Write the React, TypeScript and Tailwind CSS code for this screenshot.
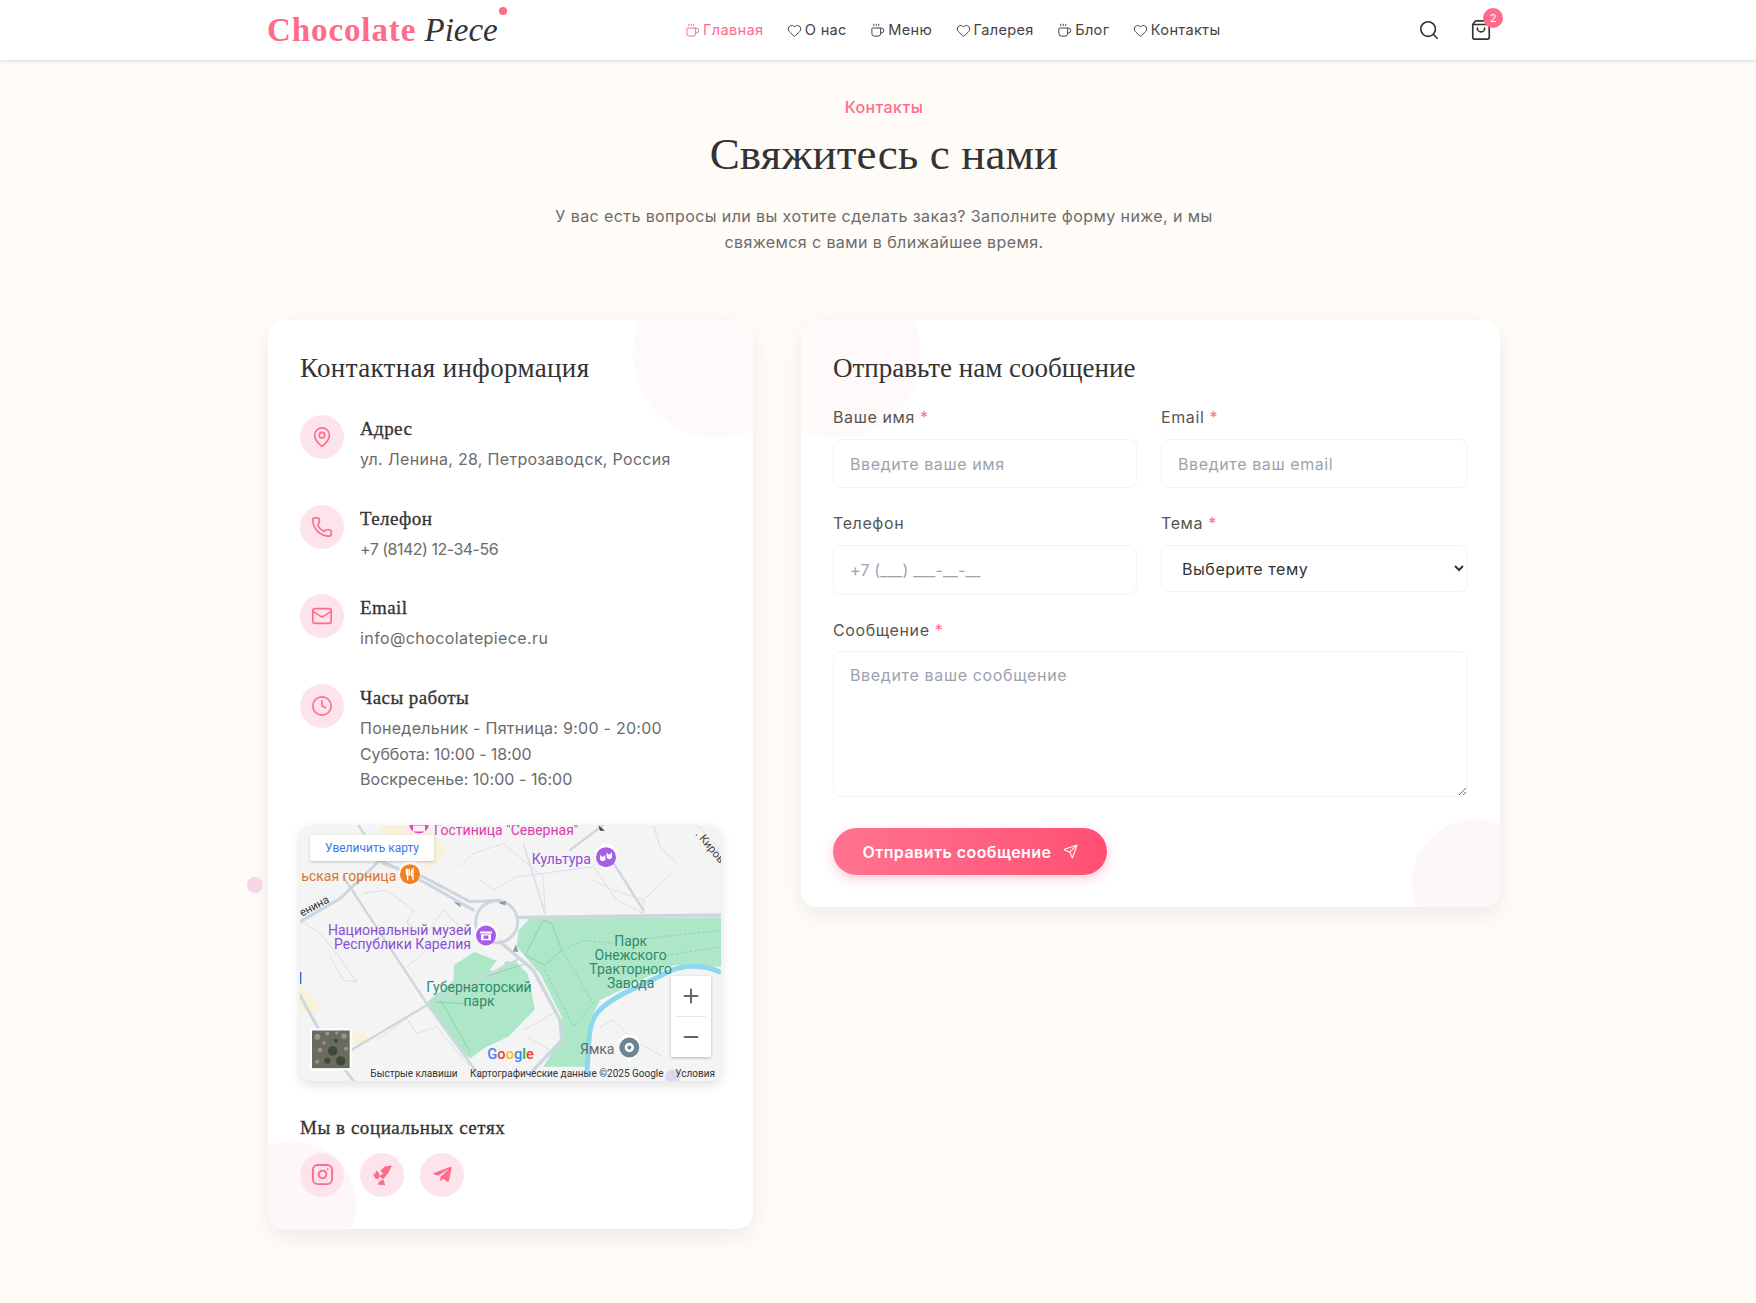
import { Clock, Coffee, Heart, Instagram, Mail, MapPin, Minus, Phone, Plus, Search, Send, ShoppingBag } from 'lucide-react'
import { FaTelegramPlane } from 'react-icons/fa'

const serif = "font-['Liberation_Serif',serif]"
const subHead = `text-[19px] leading-[28px] tracking-[0.4px] text-[#333] [-webkit-text-stroke:0.3px_#333] ${serif}`

const navItems = [
  { label: 'Главная', icon: 'cup', active: true },
  { label: 'О нас', icon: 'heart' },
  { label: 'Меню', icon: 'cup' },
  { label: 'Галерея', icon: 'heart' },
  { label: 'Блог', icon: 'cup' },
  { label: 'Контакты', icon: 'heart' },
]

const contacts = [
  { title: 'Адрес', Icon: MapPin, lines: [{ text: 'ул. Ленина, 28, Петрозаводск, Россия', cls: 'tracking-[0.3px]' }] },
  { title: 'Телефон', Icon: Phone, lines: [{ text: '+7 (8142) 12-34-56', cls: 'tracking-[-0.5px]' }] },
  { title: 'Email', Icon: Mail, lines: [{ text: 'info@chocolatepiece.ru', cls: 'tracking-[0.4px]' }] },
  {
    title: 'Часы работы',
    Icon: Clock,
    lines: [
      { text: 'Понедельник - Пятница: 9:00 - 20:00', cls: 'tracking-[0.27px]' },
      { text: 'Суббота: 10:00 - 18:00', cls: 'tracking-[-0.1px]' },
      { text: 'Воскресенье: 10:00 - 16:00', cls: 'tracking-[0.04px]' },
    ],
  },
]

const inputClass =
  'h-[49.6px] w-full rounded-lg border border-[#f8f3e6] bg-white px-4 text-[16px] text-[#333] outline-none placeholder:text-[#9ca3af]'

const Label = ({ text, required }: { text: string; required?: boolean }) => (
  <label className="mb-2 block text-[16px] leading-[25.6px] tracking-[0.6px] text-[#555]">
    {text}
    {required && <span className="text-[#ff6b8b]"> *</span>}
  </label>
)

const Pin = ({ x, y, color, children }: { x: number; y: number; color: string; children?: React.ReactNode }) => (
  <g transform={`translate(${x} ${y})`}>
    <path d="M-32 2 A33 33 0 1 1 32 2 Q24 22 0 42 Q-24 22 -32 2Z" fill="#fff" />
    <circle r="30" fill={color} />
    {children}
  </g>
)

const MapBlock = () => (
  <div className="relative h-[256px] w-full overflow-hidden rounded-xl bg-[#f4f4f5] shadow-[0_4px_12px_rgba(0,0,0,0.12)]">
    <svg viewBox="180 45 1263 767" className="block h-full w-full">
      <rect x="180" y="45" width="1263" height="767" fill="#f4f4f5" />
      {/* sand blocks */}
      <path d="M420 45 L560 45 L622 125 L570 180 L540 165 L520 130 L420 130Z" fill="#f9f1dc" />
      <path d="M180 530 L215 560 L250 600 L180 610Z" fill="#f9f1dc" />
      <path d="M335 670 L375 665 L385 690 L345 712Z" fill="#f9f1dc" />
      {/* parks */}
      <path d="M835 360 L870 325 L1443 322 L1443 470 L1300 465 L1180 520 L1080 570 L1050 630 L1040 770 L910 770 L965 680 L965 620 L900 490 L830 410Z" fill="#aee7c8" />
      <path d="M650 470 L705 435 L760 458 L825 465 L855 495 L875 595 L800 672 L735 702 L690 735 L570 580 L650 515Z" fill="#aee7c8" stroke="#aee7c8" strokeWidth="18" strokeLinejoin="round" />
      <path d="M750 478 L772 448 L798 452 L788 468 L765 488Z" fill="#f4f4f5" />
      {/* river */}
      <path d="M1443 487 C1390 462 1330 462 1280 487 C1200 530 1110 560 1070 610 C1040 650 1048 720 1040 790" fill="none" stroke="#8ed8ef" strokeWidth="15" />
      {/* thin streets */}
      <g fill="none" stroke="#dcdfe3" strokeWidth="3">
        <path d="M180 330 L240 370 L290 430 L350 515 L310 510 L270 440" />
        <path d="M370 250 L440 240 L520 300 L500 340 L560 370 L610 300 L680 370" />
        <path d="M500 470 L560 420 L610 380" />
        <path d="M660 170 L700 130 L790 100 L850 150 L910 200 L915 310" />
        <path d="M720 210 L760 240 L830 200 L1060 170 L1130 270 L1210 310" />
        <path d="M1060 210 L1120 240 L1210 270 L1300 185" />
        <path d="M1210 270 L1210 315" />
        <path d="M410 690 L500 625 L530 670 L590 650 L690 770" />
        <path d="M850 660 L940 610" />
        <path d="M860 680 L930 720" />
        <path d="M1080 650 L1120 630 L1180 690 L1270 740" />
        <path d="M1240 45 L1260 110 L1310 160" />
        <path d="M1370 45 L1443 120" />
      </g>
      {/* park paths */}
      <g fill="none" stroke="#7ac79d" strokeWidth="2">
        <path d="M910 330 L855 435 L915 465 L965 420 L935 340 Z" />
        <path d="M600 565 L690 725" />
        <path d="M580 575 L670 580" />
        <path d="M735 500 L860 460" />
      </g>
      <g fill="none" stroke="#7ac79d" strokeWidth="2" strokeDasharray="8 6">
        <path d="M965 420 L1060 580 L1000 650 L915 480" />
        <path d="M970 420 L1030 390 L1120 400 M1220 385 L1443 360" />
        <path d="M1280 435 L1443 410" />
      </g>
      {/* main roads */}
      <g fill="none" stroke="#cdd6de" strokeLinecap="round">
        <path d="M180 335 L300 265 L420 150" strokeWidth="9" />
        <path d="M420 150 L560 220 L700 300" strokeWidth="9" />
        <path d="M430 160 L550 200 L690 275 L780 270" strokeWidth="9" />
        <circle cx="770" cy="335" r="63" strokeWidth="9" />
        <path d="M835 322 L1443 315" strokeWidth="11" />
        <path d="M780 395 L880 480 L960 630 L965 690 L880 780" strokeWidth="10" />
        <path d="M310 200 L560 580 L720 800" strokeWidth="7" />
        <path d="M300 740 L560 585 L830 450" strokeWidth="7" />
        <path d="M180 555 L270 720 L340 812" strokeWidth="9" />
        <path d="M355 45 L410 130" strokeWidth="7" />
        <path d="M990 120 L1090 45" strokeWidth="7" />
        <path d="M1115 150 L1210 300" strokeWidth="7" />
        <path d="M850 100 L915 310" strokeWidth="5" stroke="#dcdfe3" />
      </g>
      <g fill="#8e98a2">
        <path d="M640 275 L660 280 L662 292 Z" />
        <path d="M775 278 L798 272 L795 286 Z" />
        <path d="M827 403 L835 425 L819 425 Z" />
      </g>
      {/* labels */}
      <g fontFamily="Roboto, sans-serif" fontSize="42">
        <text x="582" y="76" fill="#d63fa8">Гостиница "Северная"</text>
        <text x="875" y="163" fill="#8a4fd0">Культура</text>
        <text x="184" y="213" fill="#d9762a">ьская горница</text>
        <text x="264" y="374" fill="#8a4fd0">Национальный музей</text>
        <text x="282" y="416" fill="#8a4fd0">Республики Карелия</text>
        <text x="717" y="546" fill="#2f8a6a" textAnchor="middle">Губернаторский</text>
        <text x="717" y="588" fill="#2f8a6a" textAnchor="middle">парк</text>
        <text x="1172" y="407" fill="#2f8a6a" textAnchor="middle">Парк</text>
        <text x="1172" y="449" fill="#2f8a6a" textAnchor="middle">Онежского</text>
        <text x="1172" y="491" fill="#2f8a6a" textAnchor="middle">Тракторного</text>
        <text x="1172" y="533" fill="#2f8a6a" textAnchor="middle">Завода</text>
        <text x="1020" y="732" fill="#5f6b73">Ямка</text>
        <text x="186" y="0" fill="#333" transform="translate(0 320) rotate(-28 186 0)" fontSize="34">енина</text>
        <text x="1365" y="72" fill="#444" transform="rotate(50 1365 72)" fontSize="34">. Киров</text>
      </g>
      <path d="M1075 45 L1095 62 L1080 62Z" fill="#444" />
      <rect x="180" y="485" width="4" height="36" fill="#3a5fcf" />
      {/* poi pins */}
      <Pin x={537} y={40} color="#e24bc0">
        <rect x="-18" y="6" width="36" height="18" fill="#fff" opacity="0.9" />
      </Pin>
      <Pin x={510} y={192} color="#f08021">
        <path d="M-11 -16 V-3 Q-11 3 -7 3 V18 M-2 -16 V-3 Q-2 3 -7 3 M-7 -16 V0 M9 18 V-16 Q2 -8 4 4 H9" fill="none" stroke="#fff" strokeWidth="4" />
      </Pin>
      <Pin x={1098} y={141} color="#a65de8">
        <path d="M-18 -8 L-14 -2 H-6 L-2 -8 V8 Q-10 16 -18 8Z M2 -16 L6 -9 H12 L18 -16 V2 Q10 10 2 2Z" fill="#fff" />
      </Pin>
      <Pin x={738} y={376} color="#a65de8">
        <path d="M-18 -12 H18 V-6 H-18Z M-15 -4 H15 V14 H-15Z" fill="#fff" />
        <rect x="-7" y="0" width="14" height="10" fill="#a65de8" />
      </Pin>
      <Pin x={1168} y={712} color="#6b8593">
        <circle r="14" fill="#fff" />
        <circle r="6" fill="#6b8593" />
      </Pin>
      {/* google logo */}
      <text x="742" y="748" fontFamily="Roboto, sans-serif" fontSize="44" fontWeight="500">
        <tspan fill="#4285f4">G</tspan>
        <tspan fill="#ea4335">o</tspan>
        <tspan fill="#fbbc05">o</tspan>
        <tspan fill="#4285f4">g</tspan>
        <tspan fill="#34a853">l</tspan>
        <tspan fill="#ea4335">e</tspan>
      </text>
      {/* attribution */}
      <text x="391" y="800" fontFamily="Roboto, sans-serif" fontSize="30" fill="#333">Быстрые клавиши</text>
      <text x="690" y="800" fontFamily="Roboto, sans-serif" fontSize="30" fill="#333">Картографические данные ©2025 Google</text>
      <circle cx="1298" cy="800" r="22" fill="#d9c8ef" opacity="0.7" />
      <text x="1306" y="800" fontFamily="Roboto, sans-serif" fontSize="30" fill="#333">Условия</text>
      {/* satellite thumbnail */}
      <rect x="210" y="655" width="125" height="125" rx="4" fill="#fff" />
      <rect x="216" y="661" width="113" height="113" fill="#6a6b60" />
      <g fill="#97958a">
        <circle cx="232" cy="680" r="9" />
        <circle cx="262" cy="670" r="6" />
        <circle cx="312" cy="678" r="8" />
        <circle cx="240" cy="720" r="7" />
        <circle cx="318" cy="716" r="6" />
        <circle cx="232" cy="755" r="6" />
        <circle cx="290" cy="668" r="5" />
        <circle cx="252" cy="698" r="5" />
      </g>
      <g fill="#3d4a37">
        <circle cx="278" cy="722" r="14" />
        <circle cx="302" cy="752" r="14" />
        <circle cx="262" cy="752" r="9" />
        <circle cx="288" cy="692" r="6" />
      </g>
    </svg>
    <div className="absolute left-[10px] top-[10px] flex h-[26px] w-[124px] items-center justify-center rounded-[2px] bg-white font-['Roboto',sans-serif] text-[12px] text-[#3b78e7] shadow-[0_1px_3px_rgba(0,0,0,0.2)]">
      Увеличить карту
    </div>
    <div className="absolute bottom-[24px] right-[10px] flex h-[81px] w-[40px] flex-col items-center bg-white shadow-[0_1px_3px_rgba(0,0,0,0.25)]">
      <div className="flex h-10 items-center justify-center text-[#666]">
        <Plus size={22} strokeWidth={2.2} />
      </div>
      <div className="h-px w-[30px] bg-[#e6e6e6]" />
      <div className="flex h-10 items-center justify-center text-[#666]">
        <Minus size={22} strokeWidth={2.2} />
      </div>
    </div>
  </div>
)

const App = () => (
  <div className="relative min-h-[1303px] overflow-hidden bg-[#fffcf8] font-['Inter',sans-serif] text-[#333]">
    <header className="h-[60px] bg-white shadow-[0_1px_4px_rgba(0,0,0,0.14)]">
      <div className="ml-[268px] flex h-full w-[1232px] items-center">
        <a className={`relative -ml-px block w-[418px] text-[33px] leading-[60px] ${serif}`}>
          <span className="font-bold tracking-[0.9px] text-[#ff6b8b]">Chocolate</span>{' '}
          <span className="italic text-[#333]">Piece</span>
          <span className="absolute left-[232px] top-[7px] h-2 w-2 rounded-full bg-[#ff6b8b]" />
        </a>
        <nav className="mt-[2px] flex items-center gap-[23.5px] text-[14.6px] tracking-[0.3px] text-[#444]">
          {navItems.map(item => (
            <a key={item.label} className={`flex items-center gap-[3px] ${item.active ? 'text-[#ff6b8b]' : ''}`}>
              {item.icon === 'cup' ? <Coffee size={15} strokeWidth={1.6} /> : <Heart size={15} strokeWidth={1.6} />}
              {item.label}
            </a>
          ))}
        </nav>
        <div className="ml-auto mr-[8px] flex items-center gap-[30px] text-[#333]">
          <Search size={22} strokeWidth={1.8} />
          <div className="relative">
            <ShoppingBag size={22} strokeWidth={1.8} />
            <span className="absolute -right-[11px] -top-[11px] flex h-5 w-5 items-center justify-center rounded-full bg-[#ff6b8b] text-[11px] text-white">
              2
            </span>
          </div>
        </div>
      </div>
    </header>

    <main className="ml-[268px] w-[1232px] pt-[35px]">
      <div className="text-center">
        <div className="text-[16px] font-medium leading-[25.6px] tracking-[0.4px] text-[#ff6b8b]">Контакты</div>
        <h1 className={`mt-[7px] text-[45px] leading-[52px] tracking-[0.1px] text-[#333] ${serif}`}>Свяжитесь с нами</h1>
        <p className="mx-auto mt-[24.5px] w-[700px] text-[16px] leading-[25.6px] tracking-[0.41px] text-[#6b6b6b]">
          У вас есть вопросы или вы хотите сделать заказ? Заполните форму ниже, и мы
          <br />
          свяжемся с вами в ближайшее время.
        </p>
      </div>

      <div className="mt-[65px] grid grid-cols-[485px_1fr] items-start gap-12">
        <section className="relative overflow-hidden rounded-2xl bg-white p-8 shadow-[0_8px_24px_rgba(0,0,0,0.07)]">
          <div className="absolute -right-[50px] -top-[52px] h-[170px] w-[170px] rounded-full bg-[#fff9fa]" />
          <div className="absolute -bottom-10 -left-10 h-32 w-32 rounded-full bg-[#fdf7fb]" />
          <div className="relative">
            <h2 className={`text-[27px] leading-[32px] tracking-[0.35px] text-[#333] ${serif}`}>Контактная информация</h2>
            <div className="mt-[31px] flex flex-col gap-8">
              {contacts.map(({ title, Icon, lines }) => (
                <div key={title} className="flex gap-4">
                  <div className="flex h-11 w-11 shrink-0 items-center justify-center rounded-full bg-[#fde4ec] text-[#ff6b8b]">
                    <Icon size={22} strokeWidth={1.8} />
                  </div>
                  <div>
                    <h3 className={`mb-1 ${subHead}`}>{title}</h3>
                    <div className="text-[16px] leading-[25.6px] text-[#6b6b6b]">
                      {lines.map(line => (
                        <div key={line.text} className={line.cls}>
                          {line.text}
                        </div>
                      ))}
                    </div>
                  </div>
                </div>
              ))}
            </div>
            <div className="mt-[32px]">
              <MapBlock />
            </div>
            <h3 className={`mt-[33px] tracking-[0.55px] ${subHead}`}>Мы в социальных сетях</h3>
            <div className="mt-[11px] flex gap-4 text-[#ff6b8b]">
              <a className="flex h-11 w-11 items-center justify-center rounded-full bg-[#fde4ec]">
                <Instagram size={23} strokeWidth={2} />
              </a>
              <a className="flex h-11 w-11 items-center justify-center rounded-full bg-[#fde4ec]">
                <svg viewBox="66 56 64 66" className="h-[22px] w-[21px]" fill="currentColor">
                  <path d="M127 60 L105 63 L92 75 L100 85 L88 92 L100 102 L108 92 L116 82 Z" />
                  <path d="M68 84 L75 88 L78 75 L85 80 L90 92 L85 102 L76 100 L72 92Z" />
                  <path d="M82 118 L92 106 L102 104 L106 120 Z" />
                </svg>
              </a>
              <a className="flex h-11 w-11 items-center justify-center rounded-full bg-[#fde4ec]">
                <FaTelegramPlane size={21} />
              </a>
            </div>
          </div>
        </section>

        <section className="relative overflow-hidden rounded-2xl bg-white p-8 shadow-[0_8px_24px_rgba(0,0,0,0.07)]">
          <div className="absolute -left-[50px] -top-[52px] h-[170px] w-[170px] rounded-full bg-[#fff9fa]" />
          <div className="absolute -bottom-10 -right-10 h-32 w-32 rounded-full bg-[#fdf7fb]" />
          <div className="relative">
            <h2 className={`text-[27px] leading-[32px] text-[#333] ${serif}`}>Отправьте нам сообщение</h2>
            <form className="mt-[21px] flex flex-col gap-[23px]">
              <div className="grid grid-cols-[304px_1fr] gap-x-6">
                <div>
                  <Label text="Ваше имя" required />
                  <input className={`${inputClass} tracking-[0.6px]`} placeholder="Введите ваше имя" />
                </div>
                <div>
                  <Label text="Email" required />
                  <input className={`${inputClass} tracking-[0.6px]`} placeholder="Введите ваш email" />
                </div>
              </div>
              <div className="grid grid-cols-[304px_1fr] items-start gap-x-6">
                <div>
                  <Label text="Телефон" />
                  <input className={`${inputClass} tracking-[0.15px]`} placeholder="+7 (___) ___-__-__" />
                </div>
                <div>
                  <Label text="Тема" required />
                  <select className="h-[47px] w-full rounded-lg border border-[#f8f3e6] bg-white px-4 text-[16px] tracking-[0.55px] text-[#333] outline-none">
                    <option>Выберите тему</option>
                  </select>
                </div>
              </div>
              <div>
                <Label text="Сообщение" required />
                <textarea
                  className="block h-[146px] w-full rounded-lg border border-[#f8f3e6] bg-white px-4 py-[11px] text-[16px] tracking-[0.65px] text-[#333] outline-none placeholder:text-[#9ca3af]"
                  placeholder="Введите ваше сообщение"
                />
              </div>
              <button
                type="button"
                className="mt-2 flex h-[47px] w-[274px] items-center justify-center gap-[11px] rounded-full bg-linear-to-r from-[#ff7390] to-[#ff4f73] text-[16px] font-semibold tracking-[0.45px] text-white shadow-[0_4px_12px_rgba(255,107,139,0.35)]"
              >
                Отправить сообщение
                <Send size={15} strokeWidth={1.7} />
              </button>
            </form>
          </div>
        </section>
      </div>
    </main>

    <div className="absolute left-[247px] top-[877px] h-4 w-4 rounded-full bg-[#f9d5e8]" />
  </div>
)

export default App
